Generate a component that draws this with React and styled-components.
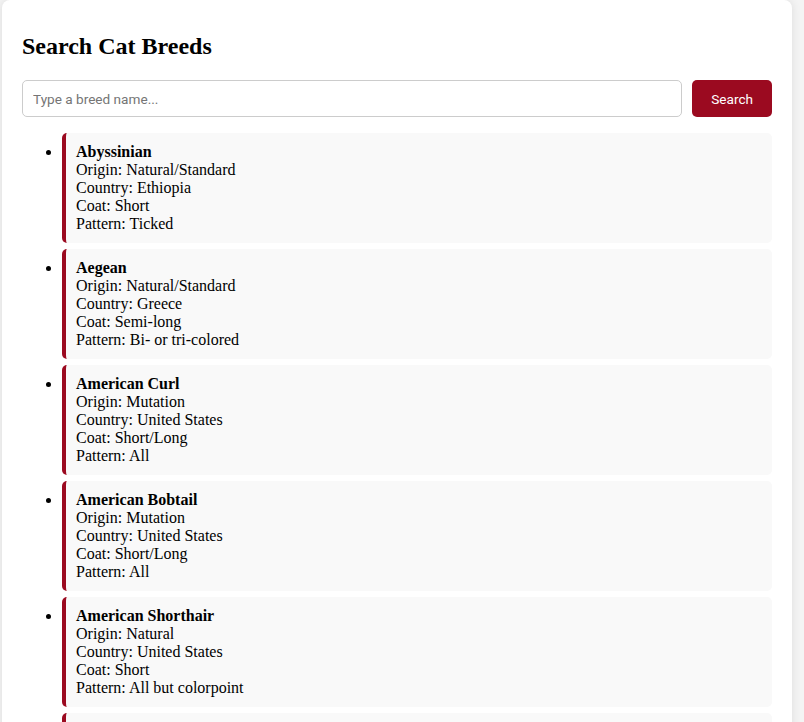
import React, { useState } from 'react';
import styled, { createGlobalStyle } from 'styled-components';

const GlobalStyle = createGlobalStyle`
  body {
    margin: 0;
    background: #f4f4f4;
    font-family: "Liberation Serif", "Times New Roman", serif;
    font-size: 16px;
    color: #000;
  }
`;

const Container = styled.div`
  box-sizing: border-box;
  width: 790px;
  margin-left: 2px;
  padding: 20px;
  background: #fff;
  border-radius: 8px;
  box-shadow: 0 0 10px rgba(0,0,0,0.1);
`;

const Title = styled.h2`
  margin: 13px 0 20px;
  font-size: 24px;
  font-weight: bold;
`;

const SearchRow = styled.div`
  display: flex;
  gap: 10px;
`;

const Input = styled.input`
  flex: 1;
  box-sizing: border-box;
  height: 37px;
  padding: 0 10px;
  border: 1px solid #ccc;
  border-radius: 5px;
  font-family: Roboto, "Liberation Sans", sans-serif;
  font-size: 13.6px;
  color: #333;
  outline: none;
  &::placeholder {
    color: #757575;
  }
`;

const SearchButton = styled.button`
  box-sizing: border-box;
  height: 37px;
  padding: 0 19px;
  border: none;
  border-radius: 5px;
  background: #9b0a20;
  color: #fff;
  font-family: Roboto, "Liberation Sans", sans-serif;
  font-size: 13.6px;
  cursor: pointer;
`;

const BreedList = styled.ul`
  margin: 16px 0 0;
  padding-left: 40px;
`;

const BreedItem = styled.li`
  background: #f9f9f9;
  border-left: 4px solid #9b0a20;
  border-radius: 5px;
  padding: 10px;
  margin-bottom: 6px;
  line-height: 18px;
`;

const breeds = [
  { name: 'Abyssinian', origin: 'Natural/Standard', country: 'Ethiopia', coat: 'Short', pattern: 'Ticked' },
  { name: 'Aegean', origin: 'Natural/Standard', country: 'Greece', coat: 'Semi-long', pattern: 'Bi- or tri-colored' },
  { name: 'American Curl', origin: 'Mutation', country: 'United States', coat: 'Short/Long', pattern: 'All' },
  { name: 'American Bobtail', origin: 'Mutation', country: 'United States', coat: 'Short/Long', pattern: 'All' },
  { name: 'American Shorthair', origin: 'Natural', country: 'United States', coat: 'Short', pattern: 'All but colorpoint' },
  { name: 'American Wirehair', origin: 'Mutation', country: 'United States', coat: 'Rex', pattern: 'All but colorpoint' },
  { name: 'Arabian Mau', origin: 'Natural', country: 'Arabian Peninsula', coat: 'Short', pattern: '' },
];

const App = () => {
  const [query, setQuery] = useState('');

  return (
    <>
      <GlobalStyle />
      <Container>
        <Title>Search Cat Breeds</Title>
        <SearchRow>
          <Input
            value={query}
            onChange={(e) => setQuery(e.target.value)}
            placeholder="Type a breed name..."
          />
          <SearchButton>Search</SearchButton>
        </SearchRow>
        <BreedList>
          {breeds.map((b) => (
            <BreedItem key={b.name}>
              <strong>{b.name}</strong><br />
              Origin: {b.origin}<br />
              Country: {b.country}<br />
              Coat: {b.coat}<br />
              Pattern: {b.pattern}
            </BreedItem>
          ))}
        </BreedList>
      </Container>
    </>
  );
};

export default App;
